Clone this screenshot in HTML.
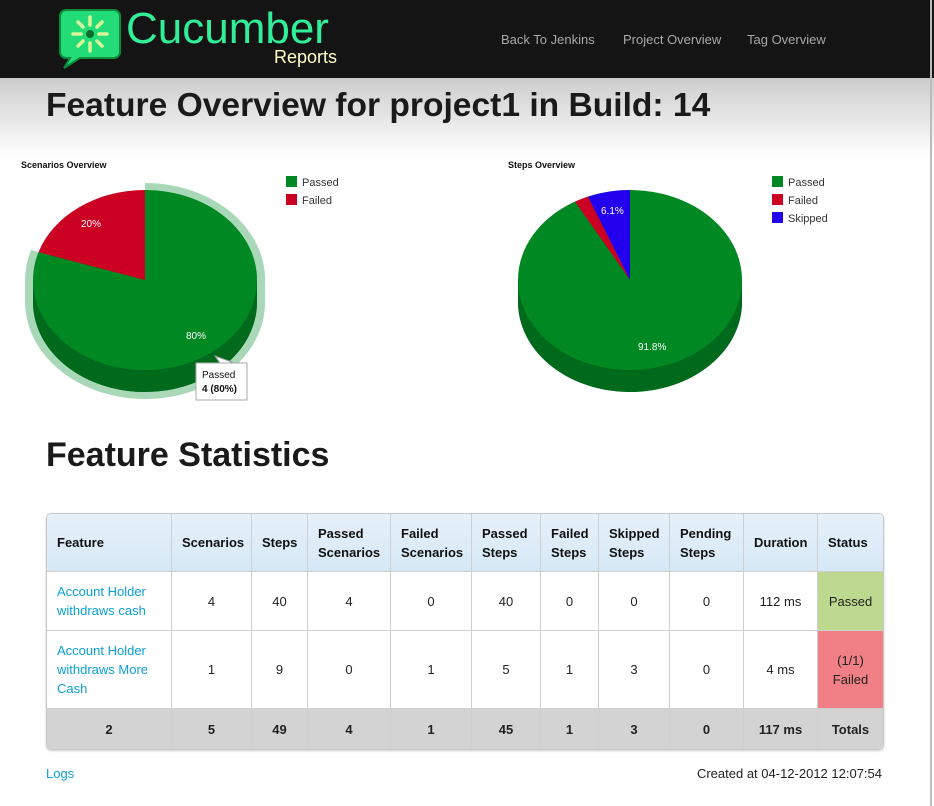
<!DOCTYPE html>
<html><head><meta charset="utf-8"><style>
*{margin:0;padding:0;box-sizing:border-box}
body{width:934px;height:806px;overflow:hidden;background:#fff;font-family:"Liberation Sans",Arial,sans-serif;position:relative;color:#222}
#hdr{position:absolute;left:0;top:0;width:934px;height:78px;background:#141414}
#grad{position:absolute;left:0;top:78px;width:934px;height:80px;background:linear-gradient(#cdcdcd,#fff)}
.nav{position:absolute;top:32px;font-size:13px;color:#a8a8a8}
h1{position:absolute;left:46px;top:87px;font-size:33.6px;font-weight:bold;color:#1a1a1a;white-space:nowrap}
h2{position:absolute;left:46px;top:436px;font-size:34px;font-weight:bold;color:#1a1a1a}
.lbl{position:absolute;font-size:9px;font-weight:bold;color:#111}
.leg{position:absolute;font-size:11px;color:#333;line-height:18px}
.leg i{display:inline-block;width:11px;height:11px;vertical-align:-1px;margin-right:5px}
table{position:absolute;left:46px;top:513px;border-collapse:separate;border-spacing:0;border:1px solid #c8c8c8;border-radius:5px;overflow:hidden;table-layout:fixed;width:836px;box-shadow:0 1px 2px #ccc}
td,th{border-right:1px solid #cfcfcf;border-bottom:1px solid #cfcfcf;font-size:13px;text-align:center;line-height:19px}
th{background:linear-gradient(#e6f1fa,#d6e8f6);font-weight:bold;text-align:left;padding-left:10px;height:58px;color:#111}
tr.r1 td{height:59px}tr.r2 td{height:78px}
tr.tot td{height:40px;background:#d3d3d3;font-weight:bold;border-bottom:none}
td.f{text-align:left;padding-left:10px;color:#0aa0d8}
td:last-child,th:last-child{border-right:none}
</style></head><body>
<div id="hdr"></div><div id="grad"></div>
<svg style="position:absolute;left:58px;top:8px" width="64" height="62" viewBox="0 0 64 62">
<path d="M8 2h48a6 6 0 0 1 6 6v36a6 6 0 0 1-6 6H22L6 60l6-10H8a6 6 0 0 1-6-6V8a6 6 0 0 1 6-6z" fill="#22dd77" stroke="#0a8a3a" stroke-width="2"/>
<circle cx="32" cy="26" r="4" fill="#0b6b2c"/>
<g stroke="#d8f59a" stroke-width="3.5" stroke-linecap="round">
<path d="M32 9v8M32 35v8M15 26h8M41 26h8M20 14l5 5M39 33l5 5M44 14l-5 5M25 33l-5 5"/></g></svg>
<div style="position:absolute;left:126px;top:4px;font-size:44px;color:#33ee99">Cucumber</div>
<div style="position:absolute;left:274px;top:47px;font-size:18px;color:#ffffc8">Reports</div>
<div class="nav" style="left:501px">Back To Jenkins</div>
<div class="nav" style="left:623px">Project Overview</div>
<div class="nav" style="left:747px">Tag Overview</div>
<div style="position:absolute;left:930px;top:0;width:2px;height:806px;background:#bbb"></div>
<h1>Feature Overview for project1 in Build: 14</h1>

<div class="lbl" style="left:21px;top:160px">Scenarios Overview</div>
<div class="leg" style="left:286px;top:174px"><div><i style="background:#008822"></i>Passed</div><div><i style="background:#cc0022"></i>Failed</div></div>
<svg style="position:absolute;left:0;top:150px" width="300" height="260">
<path d="M145 152 L145 55 A120 97 0 1 1 31 122 Z" fill="#a8d8b8"/>
<path d="M145 130 L145 33 A120 97 0 1 1 31 100 Z" fill="#a8d8b8"/>
<rect x="25" y="128" width="240" height="26" fill="#a8d8b8"/>
<path d="M33 130 v22 A112 90 0 0 0 257 152 v-22Z" fill="#006a1c"/>
<ellipse cx="145" cy="152" rx="112" ry="90" fill="#006a1c"/>
<path d="M145 130 L145 40 A112 90 0 1 1 38.5 102.2Z" fill="#008822"/>
<path d="M145 130 L38.5 102.2 A112 90 0 0 1 145 40Z" fill="#cc0022"/>
<text x="81" y="77" font-size="10" fill="#fff" font-family="Liberation Sans">20%</text>
<text x="186" y="189" font-size="10" fill="#fff" font-family="Liberation Sans">80%</text>
<path d="M215 206 L222 216 L232 212Z" fill="#fff" stroke="#999"/>
<rect x="196" y="213" width="51" height="37" fill="#fff" stroke="#aaa"/>
<text x="202" y="228" font-size="10" fill="#111" font-family="Liberation Sans">Passed</text>
<text x="202" y="242" font-size="10" font-weight="bold" fill="#111" font-family="Liberation Sans">4 (80%)</text>
</svg>

<div class="lbl" style="left:508px;top:160px">Steps Overview</div>
<div class="leg" style="left:772px;top:174px"><div><i style="background:#008822"></i>Passed</div><div><i style="background:#cc0022"></i>Failed</div><div><i style="background:#2200ee"></i>Skipped</div></div>
<svg style="position:absolute;left:500px;top:150px" width="260" height="250">
<path d="M18 130 v22 A112 90 0 0 0 242 152 v-22Z" fill="#006a1c"/>
<ellipse cx="130" cy="152" rx="112" ry="90" fill="#006a1c"/>
<ellipse cx="130" cy="130" rx="112" ry="90" fill="#008822"/>
<path d="M130 130 L75 51.6 A112 90 0 0 1 88 46.6Z" fill="#cc0022"/>
<path d="M130 130 L88 46.6 A112 90 0 0 1 130 40Z" fill="#2200ee"/>
<text x="101" y="64" font-size="10" fill="#fff" font-family="Liberation Sans">6.1%</text>
<text x="138" y="200" font-size="10" fill="#fff" font-family="Liberation Sans">91.8%</text>
</svg>

<h2>Feature Statistics</h2>
<table>
<colgroup><col style="width:125px"><col style="width:80px"><col style="width:56px"><col style="width:83px"><col style="width:81px"><col style="width:69px"><col style="width:58px"><col style="width:71px"><col style="width:74px"><col style="width:74px"><col style="width:65px"></colgroup>
<tr><th>Feature</th><th>Scenarios</th><th>Steps</th><th>Passed Scenarios</th><th>Failed Scenarios</th><th>Passed Steps</th><th>Failed Steps</th><th>Skipped Steps</th><th>Pending Steps</th><th>Duration</th><th>Status</th></tr>
<tr class="r1"><td class="f">Account Holder withdraws cash</td><td>4</td><td>40</td><td>4</td><td>0</td><td>40</td><td>0</td><td>0</td><td>0</td><td>112 ms</td><td style="background:#bcd98f">Passed</td></tr>
<tr class="r2"><td class="f">Account Holder withdraws More Cash</td><td>1</td><td>9</td><td>0</td><td>1</td><td>5</td><td>1</td><td>3</td><td>0</td><td>4 ms</td><td style="background:#f08086">(1/1)<br>Failed</td></tr>
<tr class="tot"><td>2</td><td>5</td><td>49</td><td>4</td><td>1</td><td>45</td><td>1</td><td>3</td><td>0</td><td>117 ms</td><td>Totals</td></tr>
</table>
<div style="position:absolute;left:46px;top:766px;font-size:13px;color:#0aa0d8">Logs</div>
<div style="position:absolute;right:52px;top:766px;font-size:13px;color:#222">Created at 04-12-2012 12:07:54</div>
</body></html>
